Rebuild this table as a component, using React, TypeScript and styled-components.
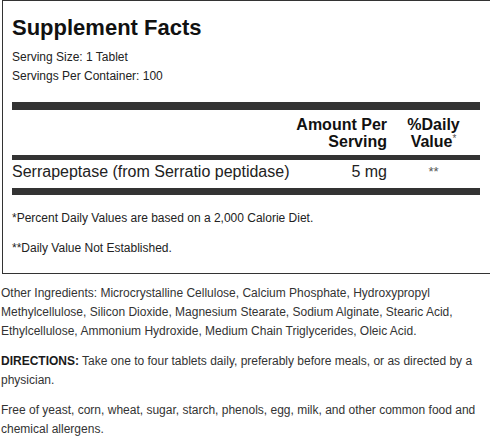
import styled, { createGlobalStyle } from "styled-components";

const GlobalStyle = createGlobalStyle`
  html, body {
    margin: 0;
    padding: 0;
    background: #ffffff;
    overflow: hidden;
  }
  body {
    font-family: "Liberation Sans", Arial, sans-serif;
  }
`;

export default function App() {
  return (
    <Page>
      <GlobalStyle />
      <FactsBox>
        <Title>Supplement Facts</Title>
        <Serving>
          <InfoLine>Serving Size: 1 Tablet</InfoLine>
          <InfoLine>Servings Per Container: 100</InfoLine>
        </Serving>
        <Bar thick={8} />
        <HeadRow>
          <span />
          <HeadCell>
            Amount Per
            <br />
            Serving
          </HeadCell>
          <HeadCell center>
            %Daily
            <br />
            Value<Star>*</Star>
          </HeadCell>
        </HeadRow>
        <Bar thick={5} />
        <ItemRow>
          <ItemName>Serrapeptase (from Serratio peptidase)</ItemName>
          <ItemAmount>5 mg</ItemAmount>
          <ItemDv>**</ItemDv>
        </ItemRow>
        <Bar thick={7} />
        <Notes>
          <Note>*Percent Daily Values are based on a 2,000 Calorie Diet.</Note>
          <Note>**Daily Value Not Established.</Note>
        </Notes>
      </FactsBox>

      <Details>
        <Paragraph>
          Other Ingredients: Microcrystalline Cellulose, Calcium Phosphate,
          Hydroxypropyl Methylcellulose, Silicon Dioxide, Magnesium Stearate,
          Sodium Alginate, Stearic Acid, Ethylcellulose, Ammonium Hydroxide,
          Medium Chain Triglycerides, Oleic Acid.
        </Paragraph>
        <Paragraph>
          <strong>DIRECTIONS:</strong> Take one to four tablets daily,
          preferably before meals, or as directed by a physician.
        </Paragraph>
        <Paragraph>
          Free of yeast, corn, wheat, sugar, starch, phenols, egg, milk, and
          other common food and chemical allergens.
        </Paragraph>
      </Details>
    </Page>
  );
}

const Page = styled.div`
  width: 482px;
  padding: 0 0 0 1px;
  color: #333333;
`;

const FactsBox = styled.div`
  width: 490px;
  margin-left: 1px;
  box-sizing: border-box;
  padding: 14px 0 15px 9px;
  border: 1px solid #333333;
  border-right: none;
  color: #1e1e1e;
`;

const Title = styled.h1`
  margin: 0;
  font-size: 22px;
  line-height: 26px;
  font-weight: 700;
  color: #111111;
`;

const Serving = styled.div`
  margin-top: 7px;
`;

const InfoLine = styled.div`
  font-size: 12px;
  line-height: 19px;
  color: #222222;
`;

const Bar = styled.div<{ thick: number }>`
  width: 468px;
  height: ${(p) => p.thick}px;
  background: #333333;
  margin-top: ${(p) => (p.thick === 8 ? 16 : 0)}px;
`;

const Grid = styled.div`
  width: 468px;
  display: grid;
  grid-template-columns: 1fr auto 93px;
`;

const HeadRow = styled(Grid)`
  padding: 6px 0 5px;
`;

const HeadCell = styled.div<{ center?: boolean }>`
  font-size: 16px;
  line-height: 17px;
  font-weight: 700;
  color: #111111;
  text-align: ${(p) => (p.center ? "center" : "right")};
`;

const Star = styled.span`
  font-size: 10px;
  vertical-align: top;
  line-height: 12px;
  color: #555555;
  font-weight: 400;
`;

const ItemRow = styled(Grid)`
  padding: 2px 0 6px;
  align-items: center;
`;

const ItemName = styled.div`
  font-size: 16px;
  line-height: 20px;
  color: #222222;
`;

const ItemAmount = styled.div`
  font-size: 16px;
  line-height: 20px;
  color: #222222;
  text-align: right;
`;

const ItemDv = styled.div`
  font-size: 13px;
  line-height: 20px;
  color: #555555;
  text-align: center;
`;

const Notes = styled.div`
  display: flex;
  flex-direction: column;
  gap: 11px;
  padding-top: 14px;
`;

const Note = styled.div`
  font-size: 12px;
  line-height: 19px;
  color: #222222;
`;

const Details = styled.div`
  display: flex;
  flex-direction: column;
  gap: 11px;
  padding-top: 10px;
`;

const Paragraph = styled.p`
  margin: 0;
  font-size: 12px;
  line-height: 19px;
  color: #333333;

  strong {
    color: #1a1a1a;
  }
`;
